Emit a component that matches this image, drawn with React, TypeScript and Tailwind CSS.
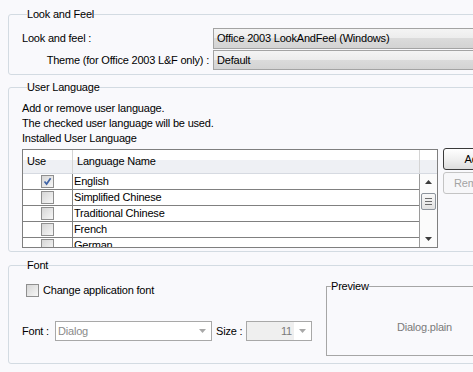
import React from 'react'

const groupCls = 'border border-[#d3dbe2] rounded-[3px]'

function Arrow({ color = '#9a9a9a' }: { color?: string }) {
  return (
    <svg width="7" height="4" viewBox="0 0 7 4">
      <path d="M0 0h7L3.5 4z" fill={color} />
    </svg>
  )
}

function CheckBox({ checked }: { checked?: boolean }) {
  return (
    <span className="w-[13px] h-[13px] border border-[#8f8f8f] bg-[linear-gradient(135deg,#d6d6d6_0%,#f7f7f7_100%)] flex items-center justify-center shrink-0">
      {checked && (
        <svg width="9" height="9" viewBox="0 0 9 9">
          <path d="M1.5 4.5L3.6 7L7.6 1.3" fill="none" stroke="#3f63a6" strokeWidth="1.7" />
        </svg>
      )}
    </span>
  )
}

function OfficeCombo({ value, h }: { value: string; h: string }) {
  return (
    <div
      className={`${h} w-[300px] border border-[#a3a3a3] flex items-center pl-[3px] bg-[linear-gradient(to_bottom,#f4f4f4_0%,#ececec_50%,#dbdbdb_50%,#d3d3d3_100%)]`}
    >
      {value}
    </div>
  )
}

const languages = ['English', 'Simplified Chinese', 'Traditional Chinese', 'French', 'German']

export default function App() {
  return (
    <div className="w-[473px] h-[372px] overflow-hidden bg-[#f9f9fc] text-[11px] tracking-[-0.2px] text-black font-['Liberation_Sans',sans-serif]">
      <div className="w-[560px] pl-[8px] pt-[8px]">
        <fieldset className={`${groupCls} pl-[13px] pt-[7px] pb-[4px]`}>
          <legend className="ml-[5px] leading-[13px]">Look and Feel</legend>
          <div className="grid grid-cols-[187px_300px] gap-x-[4px] gap-y-[1px]">
            <div className="flex items-center">Look and feel :</div>
            <OfficeCombo value="Office 2003 LookAndFeel (Windows)" h="h-[21px]" />
            <div className="flex items-center justify-end">Theme (for Office 2003 L&amp;F only) :</div>
            <OfficeCombo value="Default" h="h-[20px]" />
          </div>
        </fieldset>

        <fieldset className={`${groupCls} mt-[6px] pl-[13px] pt-[7px] pb-[3px]`}>
          <legend className="ml-[5px] leading-[13px]">User Language</legend>
          <div className="leading-[15px]">
            <p>Add or remove user language.</p>
            <p>The checked user language will be used.</p>
            <p>Installed User Language</p>
          </div>
          <div className="flex mt-[3px] gap-[5px]">
            <div className="w-[416px] h-[99px] border border-[#7f7f7f] flex flex-col bg-white">
              <div className="h-[24px] flex border-b border-[#d6dae1] bg-[linear-gradient(to_bottom,#ffffff_0%,#ffffff_42%,#eef0f4_42%,#eef0f4_100%)]">
                <div className="w-[50px] border-r border-[#d4d4d4] pl-[4px] flex items-center">Use</div>
                <div className="w-[347px] border-r border-[#d4d4d4] pl-[4px] flex items-center">Language Name</div>
                <div className="flex-1" />
              </div>
              <div className="flex flex-1 overflow-hidden">
                <div className="w-[396px] overflow-hidden">
                  {languages.map((lang, i) => (
                    <div key={lang} className="h-[16px] flex border-b border-[#808080]">
                      <div className="w-[50px] border-r border-[#808080] flex items-center justify-center">
                        <CheckBox checked={i === 0} />
                      </div>
                      <div className="pl-[1px] flex items-center leading-[15px]">{lang}</div>
                    </div>
                  ))}
                </div>
                <div className="w-[18px] border-l border-[#9a9a9a] flex flex-col items-center bg-[#fbfbfb]">
                  <div className="h-[16px] flex items-center justify-center rotate-180">
                    <Arrow color="#3c3c3c" />
                  </div>
                  <div className="mt-[3px] w-[15px] h-[17px] border border-[#8d949c] rounded-[2px] bg-[linear-gradient(to_bottom,#f8f8f8,#e2e2e2)] flex flex-col items-center justify-center gap-[2px]">
                    <span className="w-[7px] h-px bg-[#6c6c6c]" />
                    <span className="w-[7px] h-px bg-[#6c6c6c]" />
                    <span className="w-[7px] h-px bg-[#6c6c6c]" />
                  </div>
                  <div className="flex-1" />
                  <div className="h-[16px] flex items-center justify-center">
                    <Arrow color="#3c3c3c" />
                  </div>
                </div>
              </div>
            </div>
            <div className="flex flex-col gap-[2px] -mt-[1px]">
              <button className="w-[62px] h-[22px] border border-[#3a3a3a] rounded-[3px] bg-[linear-gradient(to_bottom,#ffffff_0%,#f0f0f0_50%,#dcdcdc_100%)] text-black">
                Add
              </button>
              <button className="w-[62px] h-[22px] border border-[#c4c4c4] rounded-[3px] bg-[#f7f7f9] text-[#a4a4a4]">
                Remove
              </button>
            </div>
          </div>
        </fieldset>

        <fieldset className={`${groupCls} mt-[7px] pl-[13px] pt-[8px] pb-[7px]`}>
          <legend className="ml-[5px] leading-[13px]">Font</legend>
          <div className="flex gap-[13px]">
            <div className="w-[291px] pt-[2px]">
              <div className="h-[16px] flex items-center gap-[4px] ml-[4px]">
                <CheckBox />
                <span>Change application font</span>
              </div>
              <div className="mt-[23px] flex items-center">
                <span className="w-[33px]">Font :</span>
                <div className="w-[157px] h-[20px] border border-[#a8a8a8] bg-white flex items-center">
                  <span className="flex-1 pl-[2px] text-[#8a8a8a]">Dialog</span>
                  <span className="w-[17px] flex justify-center">
                    <Arrow color="#a8a8a8" />
                  </span>
                </div>
                <span className="ml-[4px] w-[30px]">Size :</span>
                <div className="w-[66px] h-[20px] border border-[#a8a8a8] bg-white flex items-center">
                  <span className="flex-1 h-full bg-[#efefef] flex items-center justify-end pr-[2px] text-[#7a7a7a]">11</span>
                  <span className="w-[17px] flex justify-center">
                    <Arrow color="#a8a8a8" />
                  </span>
                </div>
              </div>
            </div>
            <fieldset className="w-[197px] h-[76px] border border-[#a6a6a6] pt-[6px] flex items-center justify-center">
              <legend className="ml-[4px] leading-[13px]">Preview</legend>
              <div className="h-full flex items-center justify-center text-[#7b7b7b]">Dialog.plain</div>
            </fieldset>
          </div>
        </fieldset>
      </div>
    </div>
  )
}
